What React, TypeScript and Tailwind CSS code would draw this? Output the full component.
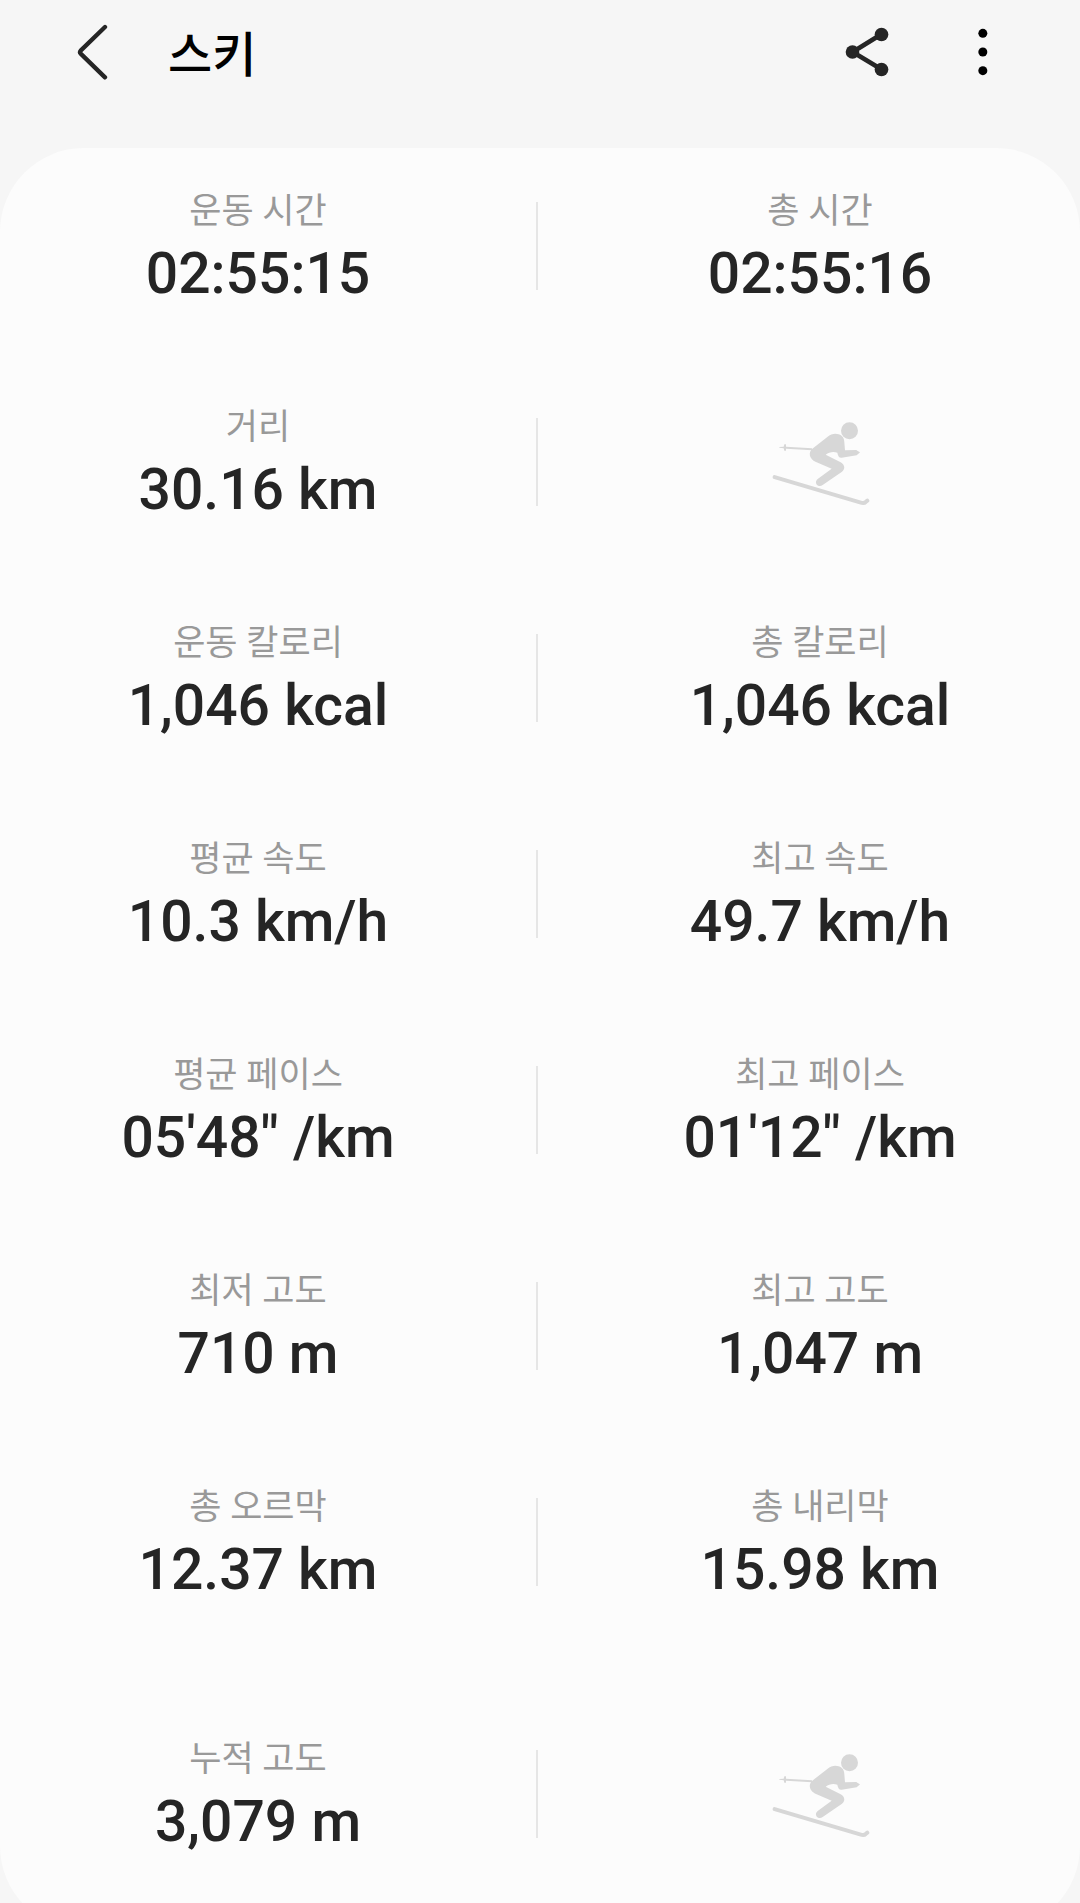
import { Fragment } from "react"

interface metric {
    label: string;
    value: string;
}

interface metricRow {
    left: metric;
    right?: metric;
    last?: boolean;
}

const rows: metricRow[] = [
    { left: { label: "운동 시간", value: "02:55:15" }, right: { label: "총 시간", value: "02:55:16" } },
    { left: { label: "거리", value: "30.16 km" } },
    { left: { label: "운동 칼로리", value: "1,046 kcal" }, right: { label: "총 칼로리", value: "1,046 kcal" } },
    { left: { label: "평균 속도", value: "10.3 km/h" }, right: { label: "최고 속도", value: "49.7 km/h" } },
    { left: { label: "평균 페이스", value: "05'48\" /km" }, right: { label: "최고 페이스", value: "01'12\" /km" } },
    { left: { label: "최저 고도", value: "710 m" }, right: { label: "최고 고도", value: "1,047 m" } },
    { left: { label: "총 오르막", value: "12.37 km" }, right: { label: "총 내리막", value: "15.98 km" } },
    { left: { label: "누적 고도", value: "3,079 m" }, last: true },
]

const BackIcon = () => (
    <svg className="w-8 h-14" viewBox="48 72 96 168" fill="none" stroke="#252525" strokeWidth="13" strokeLinecap="round" strokeLinejoin="round">
        <path d="M135 81L62 152Q58 156.500 62 161L135 232" />
    </svg>
)

const ShareIcon = () => (
    <svg className="size-13" viewBox="72 78 156 156" fill="#252525">
        <path d="M184 103L98 156L184 208" fill="none" stroke="#252525" strokeWidth="14" />
        <circle cx="184.500" cy="103.500" r="20.500" />
        <circle cx="97.500" cy="156" r="20.500" />
        <circle cx="184.500" cy="208.500" r="20.500" />
    </svg>
)

const MoreIcon = () => (
    <svg className="w-4 h-13" viewBox="468 78 48 156" fill="#000">
        <circle cx="488.500" cy="100" r="13.500" />
        <circle cx="488.500" cy="156" r="13.500" />
        <circle cx="488.500" cy="212" r="13.500" />
    </svg>
)

const SkiIcon = () => (
    <svg className="w-25 h-21" viewBox="90 66 300 252" fill="#d7d7d7" aria-hidden="true">
        <circle cx="328.500" cy="92.500" r="25.500" />
        {/* body, arm and leg */}
        <path d="M217 146L262 111C273 102 285 99 296 103C308 107 313 116 313 127L315 151L349 150L353 153L360 157L357 160L350 166L305 173C297 174 294 168 292 158C280 154 267 156 257 164L302 187C314 194 317 206 306 215L248 255C242 260 233 259 229 252C226 246 229 240 233 237L275 206L228 186C206 176 205 156 217 146Z" />
        {/* pole */}
        <path d="M118 141L131 140L133 133H138V140L216 145V151L138 146V152H133L131 145L118 143Z" />
        {/* ski */}
        <path d="M104 231.500L360 307Q372 311 377 306L382 302" fill="none" stroke="#d7d7d7" strokeWidth="12" strokeLinecap="round" strokeLinejoin="round" />
    </svg>
)

const Metric: React.FC<metric> = ({ label, value }) => {
    return (
        <dl className="text-center whitespace-nowrap">
            <dt className="text-[35px] leading-11 text-[#999999]">{label}</dt>
            <dd className="mt-3 text-[57px] leading-14 font-medium text-[#252525]">{value}</dd>
        </dl>
    )
}

const App = () => {
    return (
        <div className="h-screen overflow-y-auto [scrollbar-width:none] bg-[#f6f6f6] font-[Roboto,'Noto_Sans_CJK_KR',sans-serif]">
            <header className="flex items-center justify-between h-26 mb-11 pl-19 pr-22">
                <div className="flex items-center gap-15">
                    <button type="button" aria-label="뒤로"><BackIcon /></button>
                    <h1 className="pt-2 text-5xl font-medium text-black">스키</h1>
                </div>
                <div className="flex items-center gap-20">
                    <button type="button" aria-label="공유"><ShareIcon /></button>
                    <button type="button" aria-label="더보기"><MoreIcon /></button>
                </div>
            </header>
            <main className="bg-[#fcfcfc] rounded-[84px] pt-[42px] pb-20 pr-0.5 grid grid-cols-[1fr_auto_1fr] items-center gap-y-26">
                {rows.map((row) => (
                    <Fragment key={row.left.label}>
                        <div className={row.last ? "mt-9" : ""}>
                            <Metric {...row.left} />
                        </div>
                        <div className={`${row.last ? "mt-9" : ""} w-0.5 h-22 ml-5 mr-6 bg-[#e6e6e6]`} />
                        <div className={`${row.last ? "mt-9" : ""} flex justify-center`}>
                            {row.right ? <Metric {...row.right} /> : <div className="pt-1"><SkiIcon /></div>}
                        </div>
                    </Fragment>
                ))}
            </main>
        </div>
    )
}

export default App;
